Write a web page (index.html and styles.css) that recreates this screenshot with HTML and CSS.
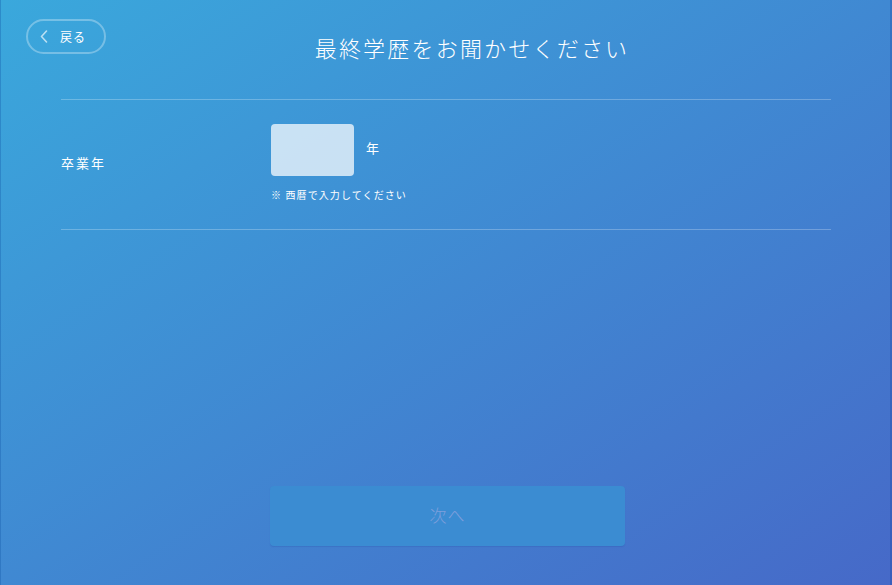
FILE: index.html
```html
<!DOCTYPE html>
<html lang="ja">
<head>
    <meta charset="UTF-8">
    <meta name="viewport" content="width=device-width, initial-scale=1.0">
    <title>最終学歴</title>
    <link rel="stylesheet" href="styles.css">
</head>
<body>

<div class="screen">
    <header class="topbar">
        <a href="#" class="back-btn">
            <svg class="chevron" width="8" height="13" viewBox="0 0 8 13">
                <polyline points="6.5,1 1.5,6.5 6.5,12" fill="none" stroke="currentColor" stroke-width="1.6" stroke-linecap="round" stroke-linejoin="round"/>
            </svg>
            <span>戻る</span>
        </a>
        <h1 class="title">最終学歴をお聞かせください</h1>
    </header>

    <div class="content">
        <div class="form-row">
            <label class="row-label" for="gradYear">卒業年</label>
            <div class="row-field">
                <div class="year-line">
                    <input type="text" id="gradYear" class="year-input">
                    <span class="unit">年</span>
                </div>
                <p class="note">※ 西暦で入力してください</p>
            </div>
        </div>
    </div>

    <footer class="footer">
        <button class="next-btn" disabled>次へ</button>
    </footer>
</div>

</body>
</html>
```

FILE: styles.css
```css
body {
    margin: 0;
    padding: 0;
    font-family: "Noto Sans CJK JP", "Noto Sans", sans-serif;
    color: #fff;
}

.screen {
    width: 892px;
    height: 585px;
    box-sizing: border-box;
    display: flex;
    flex-direction: column;
    background: linear-gradient(to bottom right, #3aa8dc, #4669c8);
    box-shadow: inset 1px 0 0 rgba(20, 90, 170, 0.35), inset -2px 0 0 rgba(30, 70, 160, 0.3);
}

.topbar {
    display: flex;
    align-items: flex-start;
    padding: 19px 26px 0;
}

.back-btn {
    display: flex;
    align-items: center;
    box-sizing: border-box;
    width: 80px;
    height: 35px;
    padding-left: 12px;
    border: 2px solid rgba(255, 255, 255, 0.3);
    border-radius: 18px;
    color: #fff;
    text-decoration: none;
    font-size: 12px;
    letter-spacing: 1px;
}

.back-btn .chevron {
    color: rgba(255, 255, 255, 0.65);
    margin-right: 12px;
}

.title {
    flex: 1;
    margin: 10px 0 0;
    padding-right: 28px;
    text-align: center;
    font-size: 22px;
    font-weight: 300;
    line-height: 36px;
    letter-spacing: 2.2px;
}

.content {
    margin: 34px 61px 0;
    border-top: 1px solid rgba(255, 255, 255, 0.25);
    border-bottom: 1px solid rgba(255, 255, 255, 0.25);
}

.form-row {
    display: flex;
    align-items: center;
}

.row-label {
    width: 210px;
    font-size: 13px;
    letter-spacing: 2px;
    padding-bottom: 4px;
}

.row-field {
    padding: 24px 0 27px;
}

.year-line {
    display: flex;
    align-items: center;
    gap: 12px;
}

.year-input {
    width: 83px;
    height: 52px;
    box-sizing: border-box;
    border: none;
    border-radius: 4px;
    background: rgba(255, 255, 255, 0.72);
    outline: none;
}

.unit {
    font-size: 13px;
    margin-top: -6px;
}

.note {
    margin: 11px 0 0;
    font-size: 10px;
    line-height: 15px;
    letter-spacing: 1.1px;
}

.footer {
    margin-top: auto;
    display: flex;
    justify-content: center;
    padding: 0 0 39px 3px;
}

.next-btn {
    width: 355px;
    height: 60px;
    padding-bottom: 4px;
    border: none;
    border-radius: 4px;
    background: #3b8cd2;
    box-shadow: 0 1px 1px rgba(40, 80, 170, 0.25);
    color: #7e9fdc;
    font-family: "Noto Sans CJK JP", "Noto Sans", sans-serif;
    font-size: 17px;
    font-weight: 300;
    letter-spacing: 1px;
}
```
